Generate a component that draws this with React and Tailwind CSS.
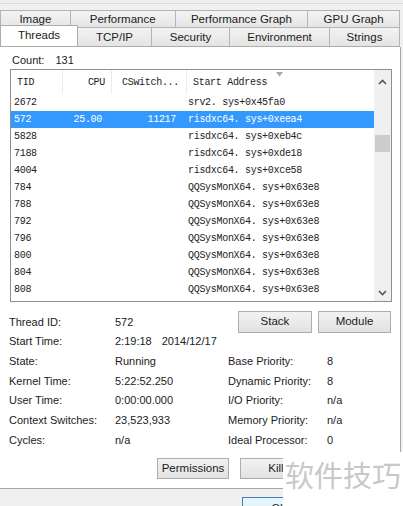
import React from "react";

const UI = { fontFamily: '"Liberation Sans", Arial, sans-serif' };
const MONO = { fontFamily: '"Liberation Mono", "Courier New", monospace' };

const threads = [
  ["2672", "", "", "srv2. sys+0x45fa0"],
  ["572", "25.00", "11217", "risdxc64. sys+0xeea4", true],
  ["5828", "", "", "risdxc64. sys+0xeb4c"],
  ["7188", "", "", "risdxc64. sys+0xde18"],
  ["4004", "", "", "risdxc64. sys+0xce58"],
  ["784", "", "", "QQSysMonX64. sys+0x63e8"],
  ["788", "", "", "QQSysMonX64. sys+0x63e8"],
  ["792", "", "", "QQSysMonX64. sys+0x63e8"],
  ["796", "", "", "QQSysMonX64. sys+0x63e8"],
  ["800", "", "", "QQSysMonX64. sys+0x63e8"],
  ["804", "", "", "QQSysMonX64. sys+0x63e8"],
  ["808", "", "", "QQSysMonX64. sys+0x63e8"],
];

function Tab({ label, w, active }) {
  return (
    <div
      className={
        active
          ? "relative z-10 flex h-[21px] -mt-[2px] items-center justify-center border border-b-0 border-[#acacac] bg-white"
          : "flex h-full items-center justify-center border-r border-t border-[#b4b4b4] bg-gradient-to-b from-[#f3f3f3] to-[#e4e4e4] pt-[1px]"
      }
      style={{ width: w }}
    >
      <span className="text-[11.5px] text-[#1b1b1b]">{label}</span>
    </div>
  );
}

function Btn({ label, w, h = 22, className = "" }) {
  return (
    <div
      className={
        "flex items-center justify-center border border-[#adadad] bg-gradient-to-b from-[#f2f2f2] to-[#e2e2e2] text-[11.5px] text-[#1b1b1b] " +
        className
      }
      style={{ width: w, height: h }}
    >
      {label}
    </div>
  );
}

function Chevron({ up }) {
  return (
    <svg width="9" height="6" viewBox="0 0 9 6">
      <path
        d={up ? "M1 5 L4.5 1.5 L8 5" : "M1 1 L4.5 4.5 L8 1"}
        fill="none"
        stroke="#555"
        strokeWidth="1.6"
      />
    </svg>
  );
}

function Field({ label, value }) {
  return (
    <>
      <span>{label}</span>
      <span>{value}</span>
    </>
  );
}

export default function App() {
  return (
    <div
      className="relative h-[506px] w-[403px] overflow-hidden bg-[#f0f0f0] text-[11px] text-[#1b1b1b]"
      style={UI}
    >
      {/* window strip above the tabs */}
      <div className="h-[10px] pt-[3px]">
        <div className="h-px bg-[#dadada]" />
      </div>

      {/* tab rows */}
      <div className="flex h-[18px] w-[400px] border-l border-[#b4b4b4]">
        <Tab label="Image" w={70} />
        <Tab label="Performance" w={105} />
        <Tab label="Performance Graph" w={133} />
        <Tab label="GPU Graph" w={92} />
      </div>
      <div className="flex h-[19px] w-[400px] items-end border-b border-[#acacac]">
        <Tab label="Threads" w={78} active />
        <div className="flex h-[19px]">
          <Tab label="TCP/IP" w={74} />
          <Tab label="Security" w={78} />
          <Tab label="Environment" w={100} />
          <Tab label="Strings" w={70} />
        </div>
      </div>

      {/* threads page */}
      <div className="h-[442px] w-[401px] border-b border-r border-[#a9a9a9] bg-white">
        <div className="flex h-[21px] items-end pl-[12px]">
          <span>Count:</span>
          <span className="ml-[11px]">131</span>
        </div>

        {/* thread list */}
        <div className="relative ml-[10px] mt-[1px] flex h-[233px] w-[382px] border border-[#8e8f8f]" style={MONO}>
          <div className="flex-1 overflow-hidden text-[10px] tracking-[-0.3px]">
            <div className="relative flex h-[24px] items-center text-[#222]">
              <div className="w-[51px] pl-[6px]">TID</div>
              <div className="flex h-full w-[49px] items-center justify-end border-l border-[#ececec] pr-[6px]">CPU</div>
              <div className="flex h-full w-[75px] items-center border-l border-[#ececec] pl-[10px]">CSwitch...</div>
              <div className="flex h-full flex-1 items-center border-l border-[#ececec] pl-[6px]">Start Address</div>
              <svg className="absolute left-[265px] top-[2px]" width="7" height="5" viewBox="0 0 7 5">
                <path d="M0 0 L7 0 L3.5 4.5 Z" fill="#a8a8a8" />
              </svg>
            </div>
            {threads.map(([tid, cpu, cs, addr, sel]) => (
              <div
                key={tid}
                className={
                  "flex h-[17px] items-center " +
                  (sel ? "bg-[#3399ff] text-white" : "text-[#222]")
                }
              >
                <div className="w-[51px] pl-[3px]">{tid}</div>
                <div className="w-[49px] pr-[9px] text-right">{cpu}</div>
                <div className="w-[75px] pr-[10px] text-right">{cs}</div>
                <div className="flex-1 pl-[2px]">{addr}</div>
              </div>
            ))}
          </div>
          {/* scrollbar */}
          <div className="flex w-[17px] flex-col items-center bg-[#f0f0f0]">
            <div className="flex h-[24px] items-center">
              <Chevron up />
            </div>
            <div className="mt-[41px] h-[17px] w-[15px] bg-[#cdcdcd]" />
            <div className="flex-1" />
            <div className="flex h-[16px] items-center">
              <Chevron />
            </div>
          </div>
        </div>

        {/* thread details */}
        <div className="mt-[10px] grid grid-cols-[106px_113px_99px_1fr] pl-[9px] [&>*]:flex [&>*]:h-[19.7px] [&>*]:items-center">
          <span>Thread ID:</span>
          <span>572</span>
          <span className="col-span-2 gap-[6px] pl-[10px]">
            <Btn label="Stack" w={74} />
            <Btn label="Module" w={73} />
          </span>
          <span>Start Time:</span>
          <span className="col-span-3">
            2:19:18<span className="ml-[10px]">2014/12/17</span>
          </span>
          <Field label="State:" value="Running" />
          <Field label="Base Priority:" value="8" />
          <Field label="Kernel Time:" value="5:22:52.250" />
          <Field label="Dynamic Priority:" value="8" />
          <Field label="User Time:" value="0:00:00.000" />
          <Field label="I/O Priority:" value="n/a" />
          <Field label="Context Switches:" value="23,523,933" />
          <Field label="Memory Priority:" value="n/a" />
          <Field label="Cycles:" value="n/a" />
          <Field label="Ideal Processor:" value="0" />
        </div>

        <div className="mt-[8px] flex gap-[11px] pl-[157px]">
          <Btn label="Permissions" w={72} h={21} />
          <Btn label="Kill" w={72} h={21} />
        </div>
      </div>

      {/* dialog footer */}
      <div className="flex pl-[242px] pt-[8px]">
        <div className="flex h-[24px] w-[75px] items-start justify-center border border-[#3c7fb1] bg-gradient-to-b from-[#eaf6fd] to-[#d9f0fc] pt-[2px]">
          OK
        </div>
      </div>

      {/* site mark in the corner */}
      <div
        className="absolute left-[283px] top-[452px] flex h-[54px] w-[120px] items-start justify-center bg-white pt-[4px] text-[29px] leading-[36px] text-[#c8c8c8]"
        style={{ fontFamily: '"Noto Sans CJK SC", sans-serif' }}
      >
        软件技巧
      </div>
    </div>
  );
}
